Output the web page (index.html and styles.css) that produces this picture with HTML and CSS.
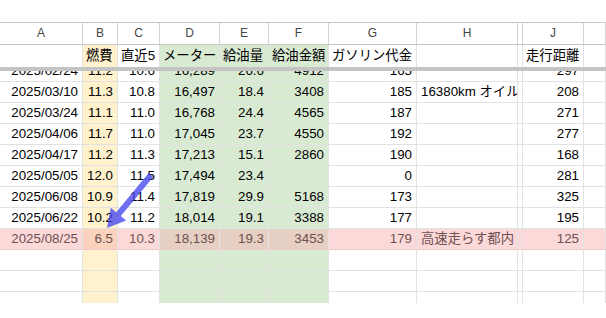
FILE: index.html
```html
<!DOCTYPE html>
<html lang="ja">
<head>
<meta charset="utf-8">
<title>燃費記録</title>
<link rel="stylesheet" href="styles.css">
</head>
<body>
<div class="page">
  <div class="top"></div>
  <div class="row heads">
    <div class="c">A</div><div class="c">B</div><div class="c">C</div><div class="c">D</div><div class="c">E</div><div class="c">F</div><div class="c">G</div><div class="c">H</div><div class="c gap"></div><div class="c">J</div><div class="c"></div>
  </div>
  <div class="row labels">
    <div class="c"></div><div class="c y">燃費</div><div class="c">直近5</div><div class="c g">メーター</div><div class="c g">給油量</div><div class="c g">給油金額</div><div class="c">ガソリン代金</div><div class="c"></div><div class="c gap"></div><div class="c">走行距離</div><div class="c"></div>
  </div>
  <div class="bar"></div>
  <div class="scroll">
    <div class="inner">
      <div class="row">
        <div class="c n">2025/02/24</div><div class="c n y">11.2</div><div class="c n">10.6</div><div class="c n g">16,289</div><div class="c n g">26.6</div><div class="c n g">4912</div><div class="c n">165</div><div class="c"></div><div class="c gap"></div><div class="c n">297</div><div class="c"></div>
      </div>
      <div class="row">
        <div class="c n">2025/03/10</div><div class="c n y">11.3</div><div class="c n">10.8</div><div class="c n g">16,497</div><div class="c n g">18.4</div><div class="c n g">3408</div><div class="c n">185</div><div class="c t">16380km オイル交換</div><div class="c gap"></div><div class="c n">208</div><div class="c"></div>
      </div>
      <div class="row">
        <div class="c n">2025/03/24</div><div class="c n y">11.1</div><div class="c n">11.0</div><div class="c n g">16,768</div><div class="c n g">24.4</div><div class="c n g">4565</div><div class="c n">187</div><div class="c"></div><div class="c gap"></div><div class="c n">271</div><div class="c"></div>
      </div>
      <div class="row">
        <div class="c n">2025/04/06</div><div class="c n y">11.7</div><div class="c n">11.0</div><div class="c n g">17,045</div><div class="c n g">23.7</div><div class="c n g">4550</div><div class="c n">192</div><div class="c"></div><div class="c gap"></div><div class="c n">277</div><div class="c"></div>
      </div>
      <div class="row">
        <div class="c n">2025/04/17</div><div class="c n y">11.2</div><div class="c n">11.3</div><div class="c n g">17,213</div><div class="c n g">15.1</div><div class="c n g">2860</div><div class="c n">190</div><div class="c"></div><div class="c gap"></div><div class="c n">168</div><div class="c"></div>
      </div>
      <div class="row">
        <div class="c n">2025/05/05</div><div class="c n y">12.0</div><div class="c n">11.5</div><div class="c n g">17,494</div><div class="c n g">23.4</div><div class="c n g"></div><div class="c n">0</div><div class="c"></div><div class="c gap"></div><div class="c n">281</div><div class="c"></div>
      </div>
      <div class="row">
        <div class="c n">2025/06/08</div><div class="c n y">10.9</div><div class="c n">11.4</div><div class="c n g">17,819</div><div class="c n g">29.9</div><div class="c n g">5168</div><div class="c n">173</div><div class="c"></div><div class="c gap"></div><div class="c n">325</div><div class="c"></div>
      </div>
      <div class="row">
        <div class="c n">2025/06/22</div><div class="c n y">10.2</div><div class="c n">11.2</div><div class="c n g">18,014</div><div class="c n g">19.1</div><div class="c n g">3388</div><div class="c n">177</div><div class="c"></div><div class="c gap"></div><div class="c n">195</div><div class="c"></div>
      </div>
      <div class="row hl">
        <div class="c n">2025/08/25</div><div class="c n y">6.5</div><div class="c n">10.3</div><div class="c n g">18,139</div><div class="c n g">19.3</div><div class="c n g">3453</div><div class="c n">179</div><div class="c t">高速走らす都内</div><div class="c gap"></div><div class="c n">125</div><div class="c"></div>
      </div>
      <div class="row">
        <div class="c"></div><div class="c y"></div><div class="c"></div><div class="c g"></div><div class="c g"></div><div class="c g"></div><div class="c"></div><div class="c"></div><div class="c gap"></div><div class="c"></div><div class="c"></div>
      </div>
      <div class="row">
        <div class="c"></div><div class="c y"></div><div class="c"></div><div class="c g"></div><div class="c g"></div><div class="c g"></div><div class="c"></div><div class="c"></div><div class="c gap"></div><div class="c"></div><div class="c"></div>
      </div>
      <div class="row">
        <div class="c"></div><div class="c y"></div><div class="c"></div><div class="c g"></div><div class="c g"></div><div class="c g"></div><div class="c"></div><div class="c"></div><div class="c gap"></div><div class="c"></div><div class="c"></div>
      </div>
    </div>
  </div>
  <svg class="arrow" width="606" height="318" viewBox="0 0 606 318" aria-hidden="true">
    <polygon points="148.7,173.1 116.2,212.2 110.8,207.7 107,228 126.2,220.5 120.8,216 153.3,176.9" fill="#4646f0" fill-opacity="0.78"/>
  </svg>
</div>
</body>
</html>
```

FILE: styles.css
```css
html, body {
  margin: 0;
  padding: 0;
  background: #ffffff;
}

body {
  font-family: "Liberation Sans", Arial, "Noto Sans CJK JP", sans-serif;
  font-size: 13.33px;
  color: #000000;
}

.page {
  position: relative;
  width: 606px;
  height: 318px;
  overflow: hidden;
}

.top {
  height: 22px;
}

.row {
  display: grid;
  grid-template-columns: 83px 35px 42px 60px 49px 60px 88px 101px 5px 61px 1fr;
}

.c {
  box-sizing: border-box;
  height: 21px;
  line-height: 20px;
  padding: 0 4px 0 4px;
  border-right: 1px solid #e2e2e2;
  border-bottom: 1px solid #e2e2e2;
  white-space: nowrap;
  overflow: hidden;
}

.n {
  text-align: right;
}

.t {
  text-align: left;
}

.y {
  background: #fff2cc;
}

.g {
  background: #d9ead3;
}

.gap {
  padding: 0;
}

.heads {
  border-top: 1px solid #c7c7c7;
}

.heads .c {
  height: 22px;
  line-height: 21px;
  text-align: center;
  font-size: 12px;
  color: #444746;
  border-right-color: #d3d3d3;
  border-bottom-color: #c7c7c7;
}

.labels .c {
  height: 22px;
  line-height: 21px;
  border-bottom: 0;
  padding-left: 3px;
  padding-right: 0;
}

.bar {
  height: 4px;
  background: #c4c4c4;
}

.scroll {
  height: 232px;
  overflow: hidden;
}

.inner {
  margin-top: -10px;
}

.hl .c {
  background: #fcd9d9;
  color: #6f5050;
  border-bottom-color: #f0caca;
}

.hl .y {
  background: #fad2bd;
}

.hl .g {
  background: #e6cfc3;
}

.arrow {
  position: absolute;
  left: 0;
  top: 0;
  pointer-events: none;
}
```
